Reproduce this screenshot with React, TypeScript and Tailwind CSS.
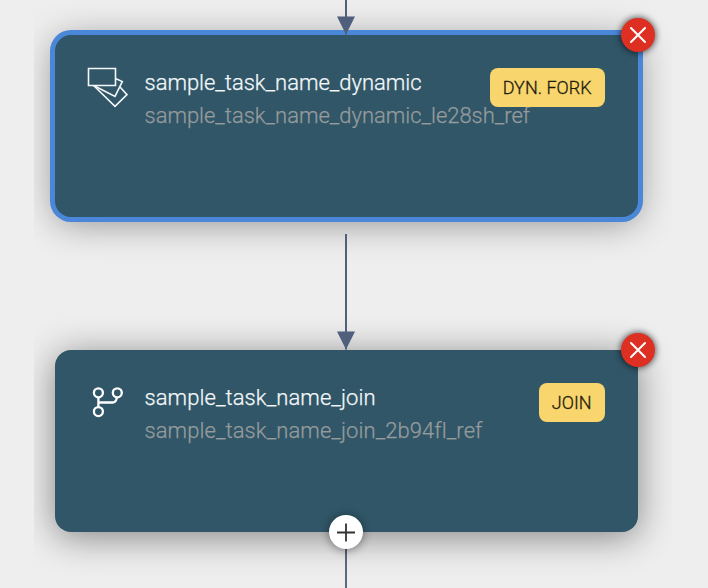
import type { ReactNode } from "react";

function CloseBadge() {
  return (
    <div className="absolute top-0 right-0 flex size-[34px] translate-x-1/2 -translate-y-1/2 items-center justify-center rounded-full bg-[#dd3022] shadow-[0_0_6px_1px_rgba(0,0,0,0.6)]">
      <svg width="34" height="34" viewBox="0 0 34 34" fill="none" stroke="#fff" strokeWidth="2" strokeLinecap="round">
        <path d="M10 10 24 24M24 10 10 24" />
      </svg>
    </div>
  );
}

function AddBadge() {
  return (
    <div className="absolute bottom-0 left-1/2 flex size-[34px] -translate-x-1/2 translate-y-1/2 items-center justify-center rounded-full bg-white shadow-[0_1px_10px_rgba(0,0,0,0.45)]">
      <svg width="34" height="34" viewBox="0 0 34 34" fill="none" stroke="#333" strokeWidth="1.8">
        <path d="M17 8.5V26.5M8 17.5H26" />
      </svg>
    </div>
  );
}

function ForkIcon() {
  return (
    <svg width="42" height="42" viewBox="86 66 42 42" fill="none" stroke="#f4f8fa" strokeWidth="1.6">
      <path d="M88.5 68.5H115.5V85.5H88.5Z" />
      <path d="M115.5 78.6 122.3 81.6 115 96.4 93.6 85.5" />
      <path d="M120 87 127 94.7 115 106.3 93.6 85.5" />
    </svg>
  );
}

function JoinIcon() {
  return (
    <svg width="42" height="42" viewBox="86 381.5 42 42" fill="none" stroke="#fff" strokeWidth="2.3">
      <circle cx="98.4" cy="393.3" r="4.5" />
      <circle cx="117.3" cy="393.3" r="4.5" />
      <circle cx="98.4" cy="412.1" r="4.5" />
      <path d="M98.4 398V407.6M98.4 403H112.4Q115.2 403 116.2 400.400L117 398" />
    </svg>
  );
}

type CardProps = {
  icon: ReactNode;
  title: string;
  reference: string;
  badge: string;
  selected?: boolean;
  children?: ReactNode;
};

function TaskCard({ icon, title, reference, badge, selected, children }: CardProps) {
  return (
    <div
      className={`relative flex h-[182.5px] w-full shrink-0 items-start rounded-[16px] bg-[#305667] pt-[31.5px] pr-[33.5px] pl-[31px] ${
        selected ? "shadow-[0_0_0_5px_#4a87d9,0_5px_36px_rgba(0,0,0,0.42)]" : "shadow-[0_5px_36px_rgba(0,0,0,0.45)]"
      }`}
    >
      {icon}
      <div
        className={`ml-[17px] w-0 grow text-[22px] leading-[33px] font-light whitespace-nowrap [-webkit-text-stroke:0.25px] ${
          selected ? "tracking-[-0.02px]" : "tracking-[0.08px]"
        }`}
      >
        <div className="text-[#f4f8fa]">{title}</div>
        <div className="text-[#969b9d]">{reference}</div>
      </div>
      <div className="relative mt-[1.5px] flex h-[39px] items-center justify-center rounded-[8px] bg-[#f9d56d] px-[13px] text-[18px] font-light text-[#1d1b10] [-webkit-text-stroke:0.3px]">
        {badge}
      </div>
      <CloseBadge />
      {children}
    </div>
  );
}

function Arrow({ length }: { length: number }) {
  return (
    <svg width="18" height={length} viewBox={`0 0 18 ${length}`} className="relative z-10 block shrink-0">
      <path d={`M9 0V${length}`} stroke="#4f5f7c" strokeWidth="2" />
      <path d={`M0 ${length - 18}H18L9 ${length}Z`} fill="#4f5f7c" />
    </svg>
  );
}

export default function App() {
  return (
    <main className="flex h-[588px] w-[708px] overflow-hidden bg-[#eeeeee] pl-[34px] font-[Roboto,sans-serif]">
      <div className="flex w-[638px] flex-col items-center overflow-hidden pr-[34px] pl-[20.5px]">
        <Arrow length={34.5} />
        <TaskCard
          selected
          icon={<ForkIcon />}
          title="sample_task_name_dynamic"
          reference="sample_task_name_dynamic_le28sh_ref"
          badge="DYN. FORK"
        />
        <div className="flex flex-col pt-[17px]">
          <Arrow length={115.5} />
        </div>
        <TaskCard
          icon={<JoinIcon />}
          title="sample_task_name_join"
          reference="sample_task_name_join_2b94fl_ref"
          badge="JOIN"
        >
          <AddBadge />
        </TaskCard>
        <div className="w-[2px] grow bg-[#5a6985]" />
      </div>
    </main>
  );
}
